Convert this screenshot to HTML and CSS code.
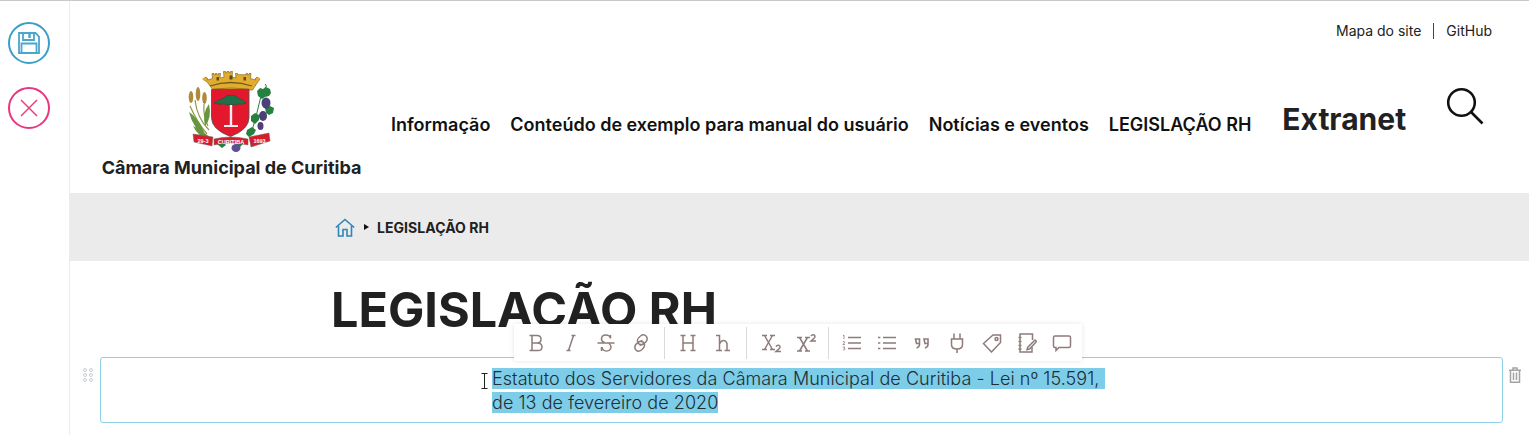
FILE: index.html
```html
<!DOCTYPE html>
<html lang="pt-BR">
<head>
<meta charset="utf-8">
<title>LEGISLAÇÃO RH</title>
<link rel="stylesheet" href="styles.css">
</head>
<body>
<div class="app">
  <aside class="sidebar">
    <button class="round round-save" aria-label="Salvar">
      <svg width="42" height="42" viewBox="0 0 42 42" fill="none" stroke="#4ba6cb" stroke-width="1.800">
        <path d="M11 11h16.500l3.500 3.500v16.500h-20z"/>
        <path d="M15 11v7h11v-7"/>
        <path d="M21.500 12v4" stroke-width="2.500"/>
        <path d="M13.500 31v-9.500h15v9.500"/>
      </svg>
    </button>
    <button class="round round-cancel" aria-label="Cancelar">
      <svg width="42" height="42" viewBox="0 0 42 42" fill="none" stroke="#e8407f" stroke-width="1.500">
        <path d="M13 13l16 16M29 13l-16 16"/>
      </svg>
    </button>
  </aside>
  <main class="main">
    <div class="top-links">
      <a class="top-link">Mapa do site</a>
      <span class="top-sep"></span>
      <a class="top-link">GitHub</a>
    </div>
    <header class="header">
      <div class="brand">
        <svg class="crest" width="90" height="84" viewBox="0 0 90 84">
          <!-- crown -->
          <path d="M16 9l3-2 2 2-.5 1 5-1.500-.5-5h2v1.200h1.500V3.500h1.500v1.200h1.500V3.500h2l-.5 4.500 4-.8-.5-5.700h2v1.200h1.500V1.500h2v1.200h1.500V1.500h2l-.5 5.700 4 .8-.5-4.500h2v1.200H59V3.500h1.500v1.200H62V3.500h2l-.5 5 5 1.500-.5-1 2-2 3 2-2.500 3.500-5 7.500H26l-5.500-7.500z" fill="#e2ad2f" stroke="#71591a" stroke-width=".6"/>
          <path d="M23 16q21-7 42 0" fill="none" stroke="#6f5a1c" stroke-width="1.300"/>
          <path d="M26 19q18-2 36 0" fill="none" stroke="#8a6d1f" stroke-width=".8"/>
          <rect x="42.500" y="5.500" width="3" height="4" fill="#5f4c16"/>
          <rect x="29.500" y="7" width="2.500" height="3.500" fill="#5f4c16"/>
          <rect x="56.500" y="7" width="2.500" height="3.500" fill="#5f4c16"/>
          <circle cx="17" cy="9" r="1.500" fill="#e2ad2f"/>
          <circle cx="71" cy="9" r="1.500" fill="#e2ad2f"/>
          <!-- wheat -->
          <path d="M3 36q7 16 17 28M8 30q2 18 14 30M17 34q-1 12 4 22" fill="none" stroke="#8b9a45" stroke-width="1.200"/>
          <ellipse cx="4" cy="27" rx="2.300" ry="6" fill="#b08a3c"/>
          <ellipse cx="11" cy="24" rx="2.300" ry="7" fill="#b08a3c"/>
          <ellipse cx="17.500" cy="28" rx="2.300" ry="6" fill="#b08a3c"/>
          <path d="M2 42q9 5 17 24-13-7-17-24zM22 34q-7 9-4 22 7-8 4-22zM6 56q8 4 18 12-12 1-18-12z" fill="#65963f"/>
          <!-- vine -->
          <path d="M70 21l3-3 3 1 3-2 4 2 1 4-2 3-4 1-3 2-4-3zM78 38l5-2 4 2-1 5-4 2-3-2zM64 46l4-3 4 2 0 5-4 4-4-3zM60 60l5-3 4 3-2 4-5 3-3-3z" fill="#26803f"/>
          <path d="M78 14q3 2 0 4M74 26q-4 18-10 38" fill="none" stroke="#26803f" stroke-width="1"/>
          <ellipse cx="79" cy="33" rx="4.500" ry="5.500" fill="#4d3f79"/>
          <ellipse cx="76" cy="46" rx="4" ry="5" fill="#4d3f79"/>
          <ellipse cx="73.500" cy="56" rx="3" ry="4" fill="#4d3f79"/>
          <!-- shield -->
          <path d="M24.500 19.500h37.500v28q0 12-18.500 19Q24.500 59.500 24.500 47.500z" fill="#e3182d" stroke="#555" stroke-width=".9"/>
          <!-- araucaria -->
          <path d="M27 33q5-4 9-4.500 3-3.500 8-3.500t8 3.500q4 .5 7 4.500-4 2-8 1-3 1.500-7 .5-4 1-7-.5-5 1-10-1z" fill="#1f7048" stroke="#0f4a2e" stroke-width=".4"/>
          <path d="M42.800 35h2.400v20.500h-2.400z" fill="#efefef"/>
          <path d="M37 55h14v2H37z" fill="#efefef"/>
          <!-- bottom foliage -->
          <path d="M30 74l6-2 3 3-4 3zM56 74l-5-2-2 3 3 3z" fill="#26803f"/>
          <ellipse cx="49" cy="78" rx="4.500" ry="4" fill="#5d5092"/>
          <!-- ribbons -->
          <path d="M6 64l20 3-1 9-18-4z" fill="#d71d2c" stroke="#666" stroke-width=".5"/>
          <path d="M27 69q16-4 34 0v6q-17-4-34 0z" fill="#d71d2c" stroke="#666" stroke-width=".5"/>
          <path d="M62 67l20-4 1 8-19 6z" fill="#d71d2c" stroke="#666" stroke-width=".5"/>
          <text class="crest-text" x="44" y="74" text-anchor="middle">CURITIBA</text>
          <text class="crest-text" x="16" y="72.500" text-anchor="middle">29-3</text>
          <text class="crest-text" x="72.500" y="73" text-anchor="middle">1693</text>
        </svg>
        <div class="brand-name">Câmara Municipal de Curitiba</div>
      </div>
      <nav class="nav">
        <a class="nav-link">Informação</a>
        <a class="nav-link">Conteúdo de exemplo para manual do usuário</a>
        <a class="nav-link">Notícias e eventos</a>
        <a class="nav-link">LEGISLAÇÃO RH</a>
        <a class="nav-extranet">Extranet</a>
      </nav>
      <svg class="search" width="40" height="40" viewBox="0 0 40 40" fill="none" stroke="#111" stroke-width="2.600">
        <circle cx="16.500" cy="15.500" r="13.300"/>
        <path d="M26 25l11.500 11.500"/>
      </svg>
    </header>
    <div class="crumbs">
      <svg class="home" width="20" height="19" viewBox="0 0 20 19" fill="none" stroke="#2f86b8" stroke-width="1.600">
        <path d="M.8 9.500L10 1.500l9.200 8"/>
        <path d="M3.500 8v10h4.500v-6.500h4V18h4.500V8"/>
      </svg>
      <span class="crumb-arrow"></span>
      <span class="crumb-text">LEGISLAÇÃO RH</span>
    </div>
    <h1 class="title">LEGISLAÇÃO RH</h1>
    <section class="editor">
      <svg class="drag" width="10" height="14" viewBox="0 0 10 14" fill="none" stroke="#c4cfcf" stroke-width="1">
        <circle cx="2" cy="2" r="1.500"/><circle cx="8" cy="2" r="1.500"/>
        <circle cx="2" cy="7" r="1.500"/><circle cx="8" cy="7" r="1.500"/>
        <circle cx="2" cy="12" r="1.500"/><circle cx="8" cy="12" r="1.500"/>
      </svg>
      <div class="block">
        <div class="toolbar">
          <div class="tool-group">
            <span class="tool"><svg width="20" height="20" viewBox="0 0 20 20" stroke-width="2"><path d="M3.500 2.500h7.500q4 0 4 3.800T11 10H6m5 0q5 0 5 4t-5 3.500H3.500M6 2.500v15"/></svg></span>
            <span class="tool"><svg width="20" height="20" viewBox="0 0 20 20"><path d="M10.500 2.500h4M12.500 2.500l-5 15M5.500 17.500h4"/></svg></span>
            <span class="tool"><svg width="20" height="20" viewBox="0 0 20 20"><path d="M1.500 10h17M14.500 5q-1-3-4.500-3-4.500 0-4.500 4 0 2.500 3 3.500M6 14q.5 4 4.500 4t4.500-4q0-2-2-3.500M14.500 2v3.500M5.500 18v-4"/></svg></span>
            <span class="tool"><svg width="20" height="20" viewBox="0 0 20 20"><path d="M11.500 7.500Q7 8.500 4.800 11.500q-2 3 .2 5.500t5.500 0q3.500-2.500 3-5.500t-3.500-3"/><path d="M8.500 12.500q4.500-1 6.700-4 2-3 -.2-5.500t-5.500 0Q6 5.500 6.500 8.500t3.500 3"/></svg></span>
          </div>
          <span class="tool-sep"></span>
          <div class="tool-group">
            <span class="tool"><svg width="20" height="20" viewBox="0 0 20 20"><path d="M2.500 2.500h5M2.500 17.500h5M12.500 2.500h5M12.500 17.500h5M5 2.500v15M15 2.500v15M5 10h10"/></svg></span>
            <span class="tool"><svg width="20" height="20" viewBox="0 0 20 20"><path d="M3 2.500h3.500v15M3 17.500h6M11.500 17.500h5.500M6.500 11q1.500-3.500 4-3.500t3.500 3v7"/></svg></span>
          </div>
          <span class="tool-sep tool-sep-b"></span>
          <div class="tool-group">
            <span class="tool"><svg width="20" height="20" viewBox="0 0 20 20"><path d="M1 2.500h5M9 2.500h5M1 16.500h5M9 16.500h5M3.500 2.500l8 14M11.500 2.500l-8 14"/><path d="M15 13.500q1-1.500 2.500-1.300t1.500 1.800q0 1.200-4 4.500H20" stroke-width="1.500"/></svg></span>
            <span class="tool"><svg width="20" height="20" viewBox="0 0 20 20"><path d="M1 4.500h5M9 4.500h5M1 18h5M9 18h5M3.500 4.500l8 13.500M11.500 4.500L3.500 18"/><path d="M15 3q1-1.500 2.500-1.300T19 3.500q0 1.200-4 4.500h5" stroke-width="1.500"/></svg></span>
          </div>
          <span class="tool-sep tool-sep-c"></span>
          <div class="tool-group">
            <span class="tool"><svg width="20" height="20" viewBox="0 0 20 20"><path d="M6 4.500h13M6 10h13M6 15.500h13" stroke-width="1.600"/><path d="M1 2.800l1-.7V6M.8 8.800q1.800-1 2 .2t-2 2.500H3M.8 14h2l-1 1.200q1.500 0 1.200 1t-2.200.8" stroke-width=".8"/></svg></span>
            <span class="tool"><svg width="20" height="20" viewBox="0 0 20 20"><path d="M1 4.500h2.300M1 10h2.300M1 15.500h2.300M6 4.500h13M6 10h13M6 15.500h13" stroke-width="1.600"/></svg></span>
            <span class="tool"><svg width="20" height="20" viewBox="0 0 20 20"><path d="M3.500 6h4v4.500H4.500zM12 6h4v4.500h-3zM7.500 10.500v1q0 2.500-3 3.500M16 10.500v1q0 2.500-3 3.500" stroke-width="1.600"/></svg></span>
            <span class="tool"><svg width="20" height="20" viewBox="0 0 20 20"><path d="M7 .5v5.500M13 .5v5.500M4.500 6h11v5.500q0 4.500-5.500 4.500t-5.500-4.500zM10 16v4"/></svg></span>
            <span class="tool"><svg width="20" height="20" viewBox="0 0 20 20"><path d="M1.500 10.500L11 2h7.500v7.500L9.500 19z"/><circle cx="14.500" cy="6" r="1.500"/></svg></span>
            <span class="tool"><svg width="20" height="20" viewBox="0 0 20 20"><path d="M15.500 7V1H3v18h12V14"/><path d="M1.500 4.500h3M1.500 8.500h3M1.500 12.500h3M1.500 16h3"/><path d="M18 7l1.500 1.500-7 7.500-2.500.7.800-2.500z"/></svg></span>
            <span class="tool"><svg width="20" height="20" viewBox="0 0 20 20"><path d="M3 3h14q1.500 0 1.500 1.500V13q0 1.500-1.500 1.500H7l-3 3v-3H3q-1.500 0-1.500-1.500V4.500Q1.500 3 3 3z"/></svg></span>
          </div>
        </div>
        <svg class="ibeam" width="7" height="16" viewBox="0 0 7 16" fill="none" stroke="#222" stroke-width="1">
          <path d="M.5.500h6M.5 15.500h6M3.500.5v15"/>
        </svg>
        <p class="text"><span class="selected">Estatuto dos Servidores da Câmara Municipal de Curitiba - Lei nº 15.591, </span><br><span class="selected">de 13 de fevereiro de 2020</span></p>
      </div>
      <svg class="trash" width="12" height="16" viewBox="0 0 12 16" fill="none" stroke="#a3a3a3" stroke-width="1.500">
        <path d="M0 3.200h12M4 3V1h4v2M1.500 3v12.200h9V3M4.500 5.500v7.500M7.500 5.500v7.500"/>
      </svg>
    </section>
  </main>
</div>
</body>
</html>
```
FILE: styles.css
```css
* { box-sizing: border-box; }
html, body { margin: 0; height: 435px; overflow: hidden; background: #fff; }
body { font-family: Inter, "Liberation Sans", sans-serif; color: #212121; border-top: 1px solid #c9c9c5; }
.app { display: flex; height: 434px; }
.sidebar { width: 70px; flex: none; border-right: 1px solid #ececec; padding: 21px 0 0 8px; display: flex; flex-direction: column; gap: 23px; }
.round { width: 42px; height: 42px; padding: 0; border-radius: 50%; background: #fff; display: block; }
.round svg { display: block; margin: -2px; }
.round-save { border: 2px solid #3a9fc7; }
.round-cancel { border: 2px solid #e8357f; }
.main { flex: 1; min-width: 0; }
.top-links { display: flex; justify-content: flex-end; align-items: center; height: 17px; margin-top: 21px; padding-right: 37px; font-size: 14px; font-weight: 400; color: #212121; }
.top-sep { width: 1px; height: 16px; background: #444; margin: 0 12px; }
.header { display: flex; height: 154px; padding-left: 32px; }
.brand { width: 259px; flex: none; display: flex; flex-direction: column; align-items: center; padding-top: 31px; }
.crest { display: block; }
.crest-text { font-family: "Liberation Sans", sans-serif; font-size: 5.500px; font-weight: 700; fill: #fff; }
.brand-name { font-size: 18px; font-weight: 700; white-space: nowrap; margin-top: 3px; line-height: 22px; }
.nav { display: flex; align-items: center; gap: 20px; margin-left: 30px; height: 40px; margin-top: 65px; color: #111; }
.nav-link { font-size: 18px; font-weight: 600; white-space: nowrap; }
.nav-extranet { font-size: 30px; font-weight: 700; margin: 0 0 11px 11px; color: #212121; white-space: nowrap; }
.search { margin: 48px 0 0 39px; flex: none; }
.crumbs { height: 68px; background: #ebebeb; display: flex; align-items: center; padding-left: 265px; }
.home { display: block; }
.crumb-arrow { width: 0; height: 0; border-left: 5px solid #111; border-top: 3.500px solid transparent; border-bottom: 3.500px solid transparent; margin: 0 8px 0 9px; }
.crumb-text { font-size: 14px; font-weight: 700; letter-spacing: .05px; }
.title { font-size: 48.500px; font-weight: 700; line-height: 58px; margin: 20px 0 0 261px; white-space: nowrap; height: 58px; }
.editor { position: relative; display: flex; align-items: flex-start; margin: 18px 0 0 13px; }
.drag { margin-top: 11px; flex: none; }
.block { position: relative; width: 1403px; height: 66px; margin: 0 6px 0 7px; border: 1px solid #8ed1e7; border-radius: 3px; padding: 9px 0 0 391px; flex: none; }
.text { margin: 0; font-size: 18px; font-weight: 300; line-height: 24px; letter-spacing: .05px; white-space: pre; color: #1f2d35; }
.selected { background: #7dcde8; }
.trash { margin-top: 10px; flex: none; }
.ibeam { position: absolute; left: 380px; top: 15px; }
.toolbar { position: absolute; left: 413px; top: -34px; width: 568px; height: 37px; background: #fff; box-shadow: 0 0 5px rgba(0, 0, 0, .1); display: flex; align-items: center; padding-left: 4px; z-index: 2; }
.tool-group { display: flex; }
.tool { width: 35px; height: 37px; display: flex; align-items: center; justify-content: center; }
.tool svg { fill: none; stroke: #8f7b7b; stroke-width: 1.500; display: block; }
.tool-sep { width: 1px; height: 32px; background: #d9d9d9; margin: 0 5px 0 6px; }
.tool-sep-b { margin: 0 6px; }
.tool-sep-c { margin: 0 5px; }
```
